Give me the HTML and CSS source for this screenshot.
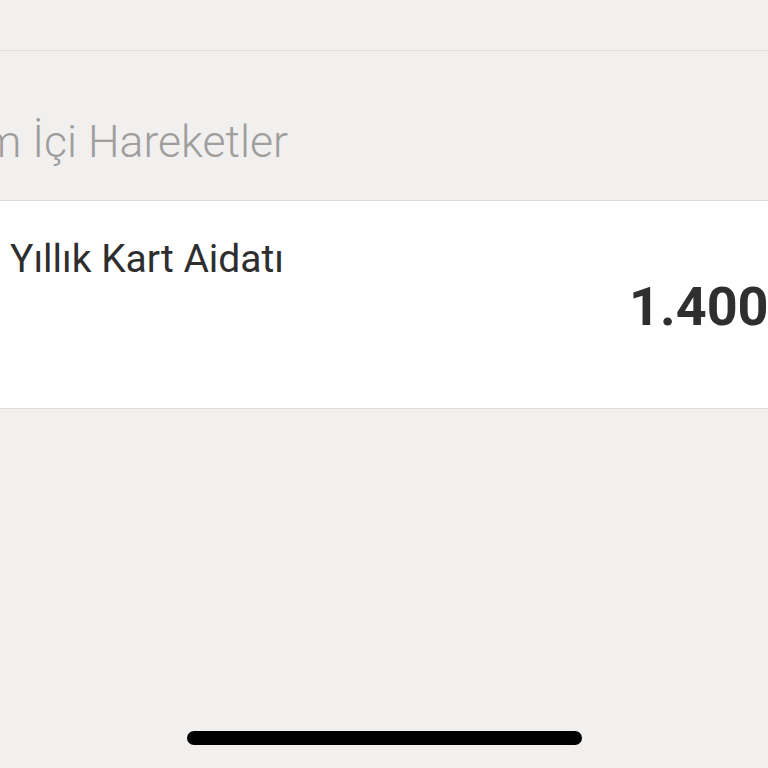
FILE: index.html
```html
<!DOCTYPE html>
<html lang="tr">
<head>
    <meta charset="UTF-8">
    <meta name="viewport" content="width=device-width, initial-scale=1.0">
    <title>Dönem İçi Hareketler</title>
    <link rel="stylesheet" href="styles.css">
</head>
<body>
    <div class="screen">
        <div class="top-bar"></div>

        <div class="section-head">
            <h2>Dönem İçi Hareketler</h2>
        </div>

        <div class="row">
            <div class="row-title">Yıllık Kart Aidatı</div>
            <div class="row-amount">1.400,00 TL</div>
        </div>

        <div class="spacer"></div>

        <div class="home-bar">
            <span class="home-indicator"></span>
        </div>
    </div>
</body>
</html>
```

FILE: styles.css
```css
html, body {
    margin: 0;
    padding: 0;
    background-color: #f1f0ef;
    font-family: Roboto, "Liberation Sans", sans-serif;
    overflow: hidden;
}

.screen {
    width: 768px;
    height: 768px;
    display: flex;
    flex-direction: column;
}

.top-bar {
    height: 50px;
    border-bottom: 1px solid #e0dfde;
}

.section-head {
    height: 149px;
    display: flex;
    align-items: center;
    border-bottom: 1px solid #dddcdb;
    white-space: nowrap;
}

.section-head h2 {
    margin: 0 0 0 -120px;
    padding-top: 32px;
    font-size: 44.6px;
    font-weight: 300;
    color: #9f9e9d;
}

.row {
    background: #ffffff;
    height: 207px;
    border-bottom: 1px solid #dcdbda;
    padding: 0 0 0 10px;
    white-space: nowrap;
}

.row-title {
    margin-top: 35px;
    font-size: 39px;
    color: #2e2e2e;
}

.row-amount {
    margin: -7px 0 0 619px;
    font-size: 54px;
    font-weight: 700;
    color: #2f2f2f;
}

.spacer {
    flex: 1;
}

.home-bar {
    height: 54px;
    display: flex;
    justify-content: center;
}

.home-indicator {
    display: block;
    width: 395px;
    height: 14px;
    margin-top: 17px;
    border-radius: 7px;
    background: #000000;
}
```
